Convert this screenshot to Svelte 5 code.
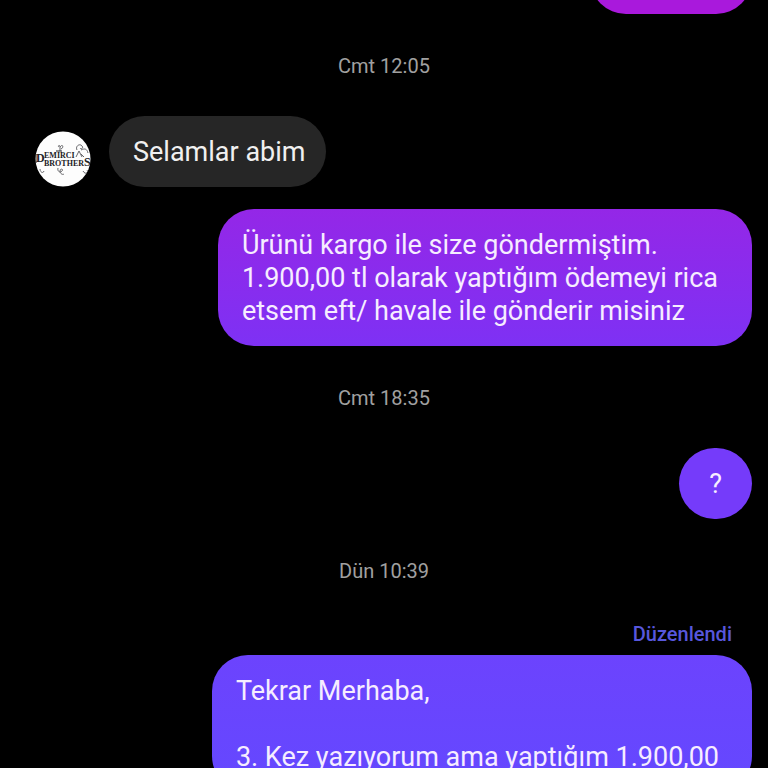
<script>
  const first = ['Ürünü kargo ile size göndermiştim.', '1.900,00 tl olarak yaptığım ödemeyi rica', 'etsem eft/ havale ile gönderir misiniz'];
  const last = ['Tekrar Merhaba,', '', '3. Kez yazıyorum ama yaptığım 1.900,00'];
</script>

<main class="thread">
  <div class="row sent"><div class="bubble previous"></div></div>
  <time class="stamp">Cmt 12:05</time>
  <div class="row received">
    <svg class="avatar" viewBox="0 0 56 56" role="img" aria-label="Demirci Brothers">
      <defs><clipPath id="disc"><circle cx="28" cy="28" r="27.5" /></clipPath></defs>
      <g clip-path="url(#disc)">
        <rect width="56" height="56" fill="#fdfdfd" />
        <g fill="#222226" font-family="Liberation Serif, serif" font-weight="700">
          <text x="1" y="31" font-size="12">D</text>
          <text x="9" y="27" font-size="8">EMIRCI</text>
          <text x="9" y="35" font-size="8">BROTHER</text>
          <text x="49" y="35" font-size="12">S</text>
        </g>
        <g fill="none" stroke="#67676b" stroke-width="1">
          <path d="M25 20v-4c0-3-3-1-1 0M25 16c3-4 4 1 1 2M23 37c-1 4 3 5 4 3 2-2-2-3-2 0 0 3 3 4 4 3M42 19c-2-4 3-7 5-4 2 2-1 4-2 2M46 19c4-2 6-1 7 3M48 40c2 4 6 2 4-1M5 38c0 3 3 5 4 2M41 26l3-6 3 6M46 23l3 3" />
          <path d="M1 23v9M21 20h6" stroke="#222226" />
        </g>
      </g>
    </svg>
    <p class="bubble grey">Selamlar abim</p>
  </div>
  <div class="row sent">
    <p class="bubble violet">{#each first as line}<span class="line">{line}</span>{/each}</p>
  </div>
  <time class="stamp">Cmt 18:35</time>
  <div class="row sent"><p class="bubble question">?</p></div>
  <time class="stamp">Dün 10:39</time>
  <span class="edited">Düzenlendi</span>
  <div class="row sent">
    <p class="bubble indigo">{#each last as line}<span class="line">{line}</span>{/each}</p>
  </div>
</main>

<style>
  :global(body) { background: #000; }
  .thread {
    box-sizing: border-box;
    height: 100vh;
    overflow: hidden;
    display: flex;
    flex-direction: column;
    padding: 0 16px;
    background: #000;
    color: #f6edff;
    font: 27px/33px Roboto, "Noto Sans", sans-serif;
  }
  .row { display: flex; flex: none; }
  .sent { justify-content: flex-end; }
  .received { align-items: flex-end; gap: 18px; padding-left: 19px; margin-bottom: 22px; }
  .bubble { margin: 0; padding: 20px 24px 18px; border-radius: 36px; }
  .previous {
    width: 114px;
    height: 34px;
    margin-top: -58px;
    background: #a919dc;
  }
  .grey { padding-right: 21px; background: #262626; color: #f0f0f0; }
  .violet { padding-right: 34px; background: linear-gradient(#9427e7, #7e31f4); }
  .question { padding-left: 30px; padding-right: 30px; background: #753bfa; }
  .indigo { padding-right: 33px; background: linear-gradient(#6c43fd, #6448ff); }
  .line { display: block; min-height: 33px; white-space: nowrap; }
  .stamp {
    flex: none;
    align-self: center;
    margin: 39px 0 37px;
    font-size: 20px;
    line-height: 26px;
    color: #a0a0a0;
  }
  .edited {
    flex: none;
    align-self: flex-end;
    margin: 0 20px 8px;
    font-size: 20px;
    font-weight: 500;
    line-height: 26px;
    color: #5757dc;
  }
  .avatar { flex: none; width: 56px; height: 56px; }
</style>
